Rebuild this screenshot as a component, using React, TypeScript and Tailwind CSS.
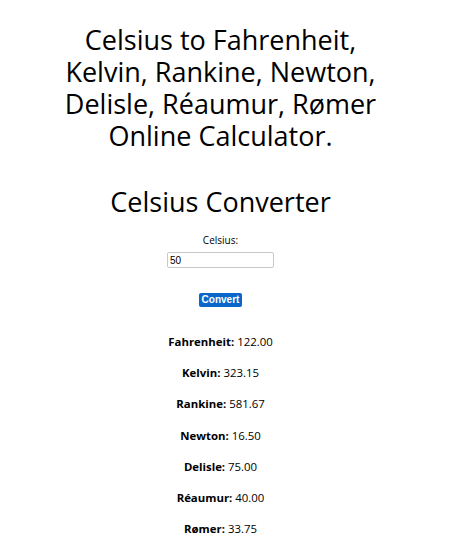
import { useState } from 'react'

const results = [
  ['Fahrenheit', '122.00'],
  ['Kelvin', '323.15'],
  ['Rankine', '581.67'],
  ['Newton', '16.50'],
  ['Delisle', '75.00'],
  ['Réaumur', '40.00'],
  ['Rømer', '33.75'],
]

export default function App() {
  const [value, setValue] = useState('50')

  return (
    <div className="min-h-[542px] w-[441px] bg-white text-black font-['Open_Sans',sans-serif] text-center">
      <h1 className="pt-[24px] text-[27px] leading-[32px]">
        Celsius to Fahrenheit,<br />
        Kelvin, Rankine, Newton,<br />
        Delisle, Réaumur, Rømer<br />
        Online Calculator.
      </h1>

      <h2 className="mt-[33px] text-[27px] leading-[34px]">Celsius Converter</h2>

      <div className="mt-[14px] flex flex-col items-center">
        <label className="text-[10px] leading-[14px]">Celsius:</label>
        <input
          value={value}
          onChange={e => setValue(e.target.value)}
          className="mt-[5px] h-[16px] w-[107px] rounded-[2px] border border-[#c8c8c8] px-[2px] font-['Liberation_Sans',sans-serif] text-[10px] outline-none"
        />
        <button className="mt-[25px] h-[14px] rounded-[2px] bg-[#0a66c8] px-[3px] font-['Liberation_Sans',sans-serif] text-[10px] font-bold leading-[14px] text-white">
          Convert
        </button>
      </div>

      <div className="mt-[26px] flex flex-col gap-[14px] text-[11.4px] leading-[17.2px]">
        {results.map(([name, val]) => (
          <p key={name}>
            <span className="font-bold">{name}:</span> {val}
          </p>
        ))}
      </div>
    </div>
  )
}
